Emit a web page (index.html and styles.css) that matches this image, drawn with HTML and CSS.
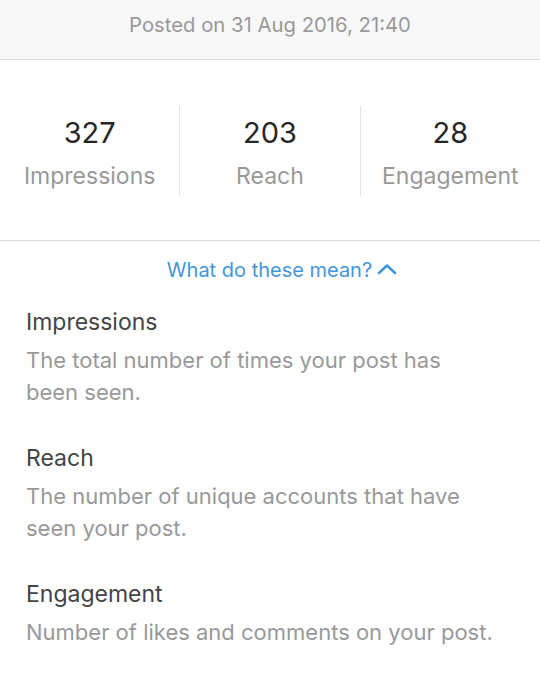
FILE: index.html
```html
<!DOCTYPE html>
<html lang="en">
<head>
    <meta charset="UTF-8">
    <meta name="viewport" content="width=device-width, initial-scale=1.0">
    <title>Post Insights</title>
    <link rel="stylesheet" href="styles.css">
</head>
<body>
    <div class="posted-bar">Posted on 31 Aug 2016, 21:40</div>

    <div class="stats">
        <div class="stat">
            <div class="stat-value">327</div>
            <div class="stat-label">Impressions</div>
        </div>
        <div class="stat">
            <div class="stat-value">203</div>
            <div class="stat-label">Reach</div>
        </div>
        <div class="stat">
            <div class="stat-value">28</div>
            <div class="stat-label">Engagement</div>
        </div>
    </div>

    <div class="help">
        <a href="#" class="help-toggle">What do these mean?
            <svg class="chevron" width="20" height="12" viewBox="0 0 20 12">
                <path d="M2 10 L10 2.5 L18 10" fill="none" stroke="currentColor" stroke-width="2.6" stroke-linecap="round" stroke-linejoin="round"/>
            </svg>
        </a>

        <div class="term">
            <h3>Impressions</h3>
            <p>The total number of times your post has been seen.</p>
        </div>
        <div class="term">
            <h3>Reach</h3>
            <p>The number of unique accounts that have seen your post.</p>
        </div>
        <div class="term">
            <h3>Engagement</h3>
            <p>Number of likes and comments on your post.</p>
        </div>
    </div>
</body>
</html>
```

FILE: styles.css
```css
body {
    font-family: Inter, "Liberation Sans", sans-serif;
    background: #fff;
    margin: 0;
    color: #262626;
}

.posted-bar {
    background: #f8f8f8;
    border-bottom: 1px solid #dcdcdc;
    height: 59px;
    line-height: 49px;
    text-align: center;
    font-size: 20.3px;
    color: #999;
}

.stats {
    display: flex;
    padding: 46px 0 44px;
    border-bottom: 1px solid #dbdbdb;
}

.stat {
    flex: 1;
    height: 90px;
    padding-top: 9px;
    box-sizing: border-box;
    text-align: center;
}

.stat + .stat {
    border-left: 1px solid #e4e4e4;
}

.stat-value {
    font-size: 29px;
    line-height: 36px;
    color: #262626;
}

.stat-label {
    margin-top: 10px;
    font-size: 23px;
    line-height: 30px;
    color: #999;
}

.help {
    padding: 16px 42px 0 26px;
}

/* toggle sits a little right of centre, next to its chevron */
.help-toggle {
    display: flex;
    justify-content: center;
    align-items: center;
    gap: 5px;
    margin-left: 40px;
    font-size: 20px;
    line-height: 26px;
    color: #4396d8;
    text-decoration: none;
    margin-bottom: 24px;
}

.chevron {
    margin-top: -2px;
}

.term {
    margin-bottom: 35px;
}

.term h3 {
    margin: 0 0 7px;
    font-size: 23px;
    font-weight: 400;
    line-height: 30px;
    color: #444;
}

.term p {
    margin: 0;
    font-size: 22px;
    line-height: 32px;
    color: #999;
}
```
